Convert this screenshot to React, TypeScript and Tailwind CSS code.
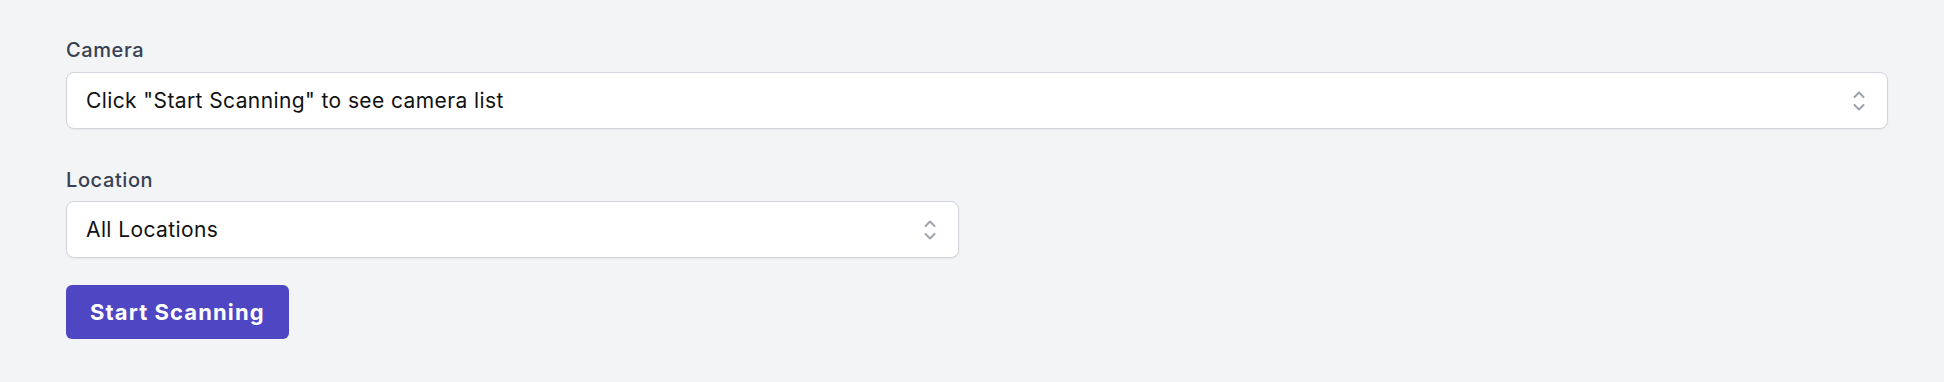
import React from "react";

function Chevrons() {
  return (
    <svg width="14" height="24" viewBox="0 0 14 24" fill="none" stroke="#9ca3af" strokeWidth="2" strokeLinecap="round" strokeLinejoin="round">
      <path d="M2.5 8 L7 3.5 L11.5 8" />
      <path d="M2.5 16 L7 20.5 L11.5 16" />
    </svg>
  );
}

function Select({ text, widthClass }: { text: string; widthClass: string }) {
  return (
    <div
      className={`${widthClass} h-[57px] bg-white border border-[#d1d5db] rounded-[8px] shadow-[0_1px_2px_rgba(0,0,0,0.05)] flex items-center justify-between pl-[19px] pr-[21px]`}
    >
      <span className="text-[21px] tracking-[0.4px] text-[#111111] leading-none">{text}</span>
      <Chevrons />
    </div>
  );
}

export default function App() {
  return (
    <div
      className="min-h-[382px] w-full bg-[#f3f4f6] pt-[38px] pl-[66px] pr-[56px] flex flex-col"
      style={{ fontFamily: "Inter, 'Noto Sans', sans-serif" }}
    >
      <label className="text-[20px] tracking-[0.6px] leading-[25px] font-medium text-[#374151]">Camera</label>
      <div className="mt-[9px]">
        <Select text={'Click "Start Scanning" to see camera list'} widthClass="w-full" />
      </div>
      <label className="mt-[39px] text-[20px] tracking-[0.6px] leading-[25px] font-medium text-[#374151]">Location</label>
      <div className="mt-[8px]">
        <Select text="All Locations" widthClass="w-[893px]" />
      </div>
      <div className="mt-[27px]">
        <button className="h-[54px] px-[24px] rounded-[6px] bg-[#4f46c4] text-white text-[22px] tracking-[1.1px] font-bold leading-none">
          Start Scanning
        </button>
      </div>
    </div>
  );
}
